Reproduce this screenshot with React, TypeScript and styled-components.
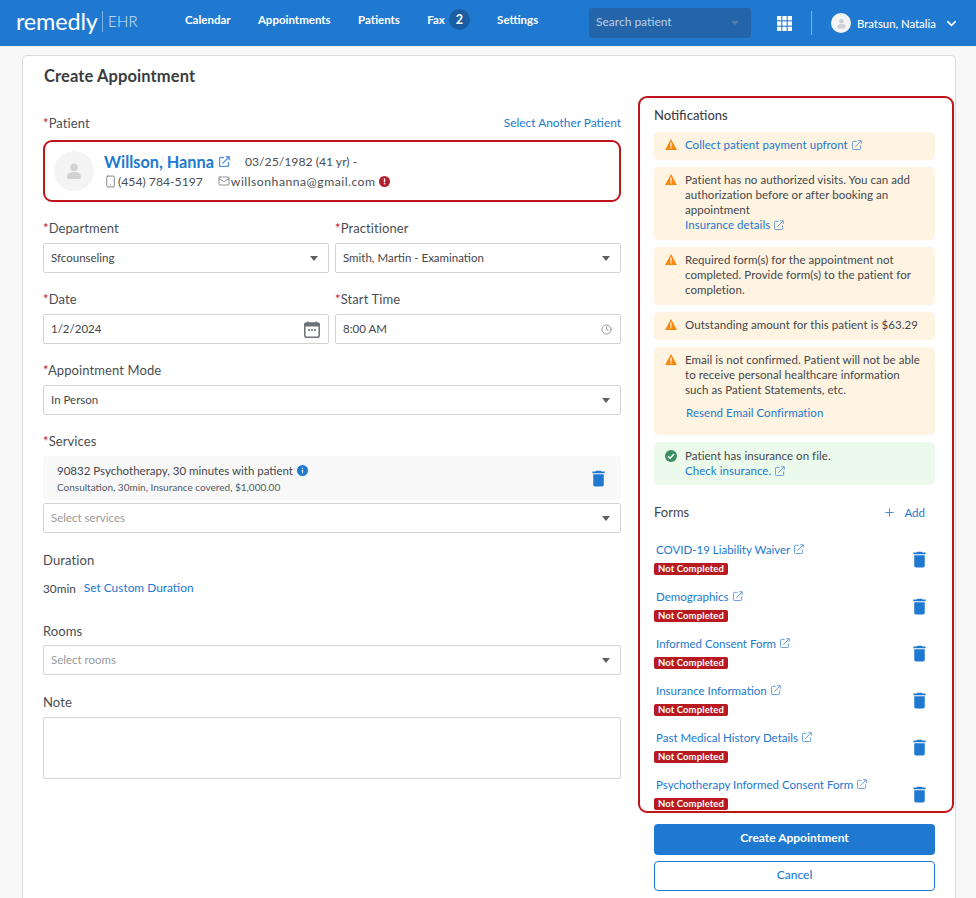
import React from 'react';
import styled, { createGlobalStyle } from 'styled-components';
import { Clock, Smartphone, Mail, Plus, ChevronDown } from 'lucide-react';

const Global = createGlobalStyle`
  html, body { margin: 0; padding: 0; height: 898px; overflow: hidden; background: #f8f8f8; }
  body { font-family: Lato, "Open Sans", sans-serif; color: #3f4347; }
  * { box-sizing: border-box; }
`;

const blue = '#2079d0';

const Header = styled.header`
  height: 46px; background: ${blue}; display: flex; align-items: center; color: #fff;
`;
const Logo = styled.div`
  width: 185px; padding-left: 16px; display: flex; align-items: center; height: 46px; padding-bottom: 5px;
`;
const LogoWord = styled.span`
  font-size: 23.5px; font-weight: 400; letter-spacing: -0.2px; line-height: 30px; width: 86px; white-space: nowrap;
`;
const LogoSuffix = styled.span`
  font-size: 15px; font-weight: 300; border-left: 1px solid #7fb3e6; padding-left: 5px; line-height: 21px; margin-top: 1px; color: #d5e6f7; letter-spacing: 0.2px;
`;
const Nav = styled.nav`
  width: 404px; display: flex; align-items: center; gap: 27.3px; padding-bottom: 7px;
`;
const NavItem = styled.a`
  font-size: 11.5px; font-weight: 700; display: flex; align-items: center; gap: 4px; color: #fff;
`;
const Badge = styled.span`
  width: 21px; height: 21px; border-radius: 50%; background: #1a5da3; display: flex; align-items: center; justify-content: center; font-size: 12.5px;
`;
const Search = styled.div`
  width: 162px; height: 30px; margin-top: -1px; background: #2464a8; border-radius: 3px; display: flex; align-items: center; justify-content: space-between;
  padding: 0 12px 2px 7px; font-size: 12px; color: #b9cfe6;
`;
const SearchCaret = styled.i`
  width: 0; height: 0; border-left: 4px solid transparent; border-right: 4px solid transparent; border-top: 4px solid #5a7ea6; margin-top: 2px;
`;
const GridWrap = styled.div`
  width: 60px; display: flex; justify-content: flex-end; padding-right: 19px; padding-left: 26px;
`;
const Divider = styled.div`
  width: 1px; height: 24px; background: #7fb3e6; margin: 0 19px 0 0;
`;
const Avatar = styled.div<{ $size: number; $bg: string }>`
  width: ${p => p.$size}px; height: ${p => p.$size}px; border-radius: 50%; background: ${p => p.$bg};
  display: flex; align-items: center; justify-content: center; flex-shrink: 0;
`;
const UserName = styled.span`
  font-size: 11.3px; font-weight: 500; margin: 0 8px 0 6px; white-space: nowrap;
`;

const Card = styled.main`
  margin: 9px 20px 0 22px; width: 934px; height: 843px; background: #fff; border: 1px solid #dcdcdc; border-bottom: 0; border-radius: 5px 5px 0 0;
  padding: 0 0 0 20px; display: flex; gap: 17px;
`;
const LeftCol = styled.div`
  width: 578px; flex-shrink: 0;
`;
const Title = styled.h1`
  margin: 0 0 16px; font-size: 16.5px; font-weight: 700; color: #3a3d40; height: 41px; line-height: 40px; letter-spacing: 0.1px; padding-left: 1px;
`;
const Field = styled.div`
  margin-bottom: 16px;
`;
const LabelRow = styled.div<{ $gap?: number }>`
  display: flex; justify-content: space-between; align-items: center; height: 20px; margin-bottom: ${p => p.$gap ?? 5}px;
`;
const Label = styled.label`
  font-size: 13px; color: #4a4e52; letter-spacing: 0.1px;
`;
const Req = styled.span`
  color: #c8141c;
`;
const Link = styled.a<{ $size?: number }>`
  color: ${blue}; font-size: ${p => p.$size ?? 11.5}px; display: inline-flex; align-items: center; gap: 4px;
`;
const RaisedLink = styled(Link)`
  padding-bottom: 2px;
`;
const PatientBox = styled.div`
  height: 62px; border: 2px solid #c0141c; border-radius: 9px; display: flex; align-items: center; padding: 0 9px; gap: 10px;
`;
const PatientInfo = styled.div`
  display: flex; flex-direction: column; gap: 2px;
`;
const PatientLine = styled.div`
  display: flex; align-items: center; font-size: 12.2px; color: #4a4e52; height: 18px;
`;
const PatientName = styled.a`
  font-size: 16.3px; font-weight: 700; color: ${blue}; display: inline-flex; align-items: center; gap: 5px; margin-right: 15px;
`;
const Phone = styled.span`
  margin: 0 15px 0 1px;
`;
const Email = styled.span`
  margin: 0 3px 0 1px; letter-spacing: 0.5px;
`;
const Row = styled.div`
  display: flex; gap: 6px;
`;
const HalfField = styled(Field)`
  flex: 1; min-width: 0;
`;
const Control = styled.div<{ $muted?: boolean }>`
  height: 30px; border: 1px solid #d4d4d4; border-radius: 2px; display: flex; align-items: center; justify-content: space-between;
  padding: 0 9px 2px 7px; font-size: 11.5px; color: ${p => (p.$muted ? '#9a9a9a' : '#43474b')}; background: #fff;
`;
const Caret = styled.i`
  width: 0; height: 0; border-left: 4px solid transparent; border-right: 4px solid transparent; border-top: 5px solid #5d6064; margin: 2px 1px 0 0;
`;
const ControlIcon = styled.span`
  display: flex; margin: 2px -1px 0 0;
`;
const ServiceBox = styled.div`
  height: 44px; background: #f8f8f8; border-radius: 3px; display: flex; align-items: center; justify-content: space-between; padding: 0 12px 0 14px; margin-bottom: 3px;
`;
const ServiceText = styled.div`
  display: flex; flex-direction: column; gap: 3px;
`;
const ServiceMain = styled.div`
  font-size: 11.5px; line-height: 15px; display: flex; align-items: center; gap: 4px; color: #43474b;
`;
const ServiceSub = styled.div`
  font-size: 10px; line-height: 13px; color: #55595d;
`;
const ServicesField = styled(Field)`
  margin-bottom: 17px;
`;
const DurationField = styled(Field)`
  margin-bottom: 18px;
`;
const DurationRow = styled.div`
  display: flex; align-items: center; gap: 8px; font-size: 11.8px; height: 30px; margin-top: -2px; color: #43474b;
`;
const RoomsField = styled(Field)`
  margin-bottom: 17px;
`;
const TextArea = styled.div`
  height: 62px; border: 1px solid #d4d4d4; border-radius: 2px;
`;

const RightCol = styled.div`
  width: 316px; flex-shrink: 0; padding-top: 40px;
`;
const Panel = styled.section`
  height: 717px; border: 2px solid #c0141c; border-radius: 9px; padding: 0 17px 0 14px; overflow: hidden;
`;
const PanelTitle = styled.h2`
  margin: 0; font-size: 13px; font-weight: 500; color: #3f4347; height: 34px; line-height: 35px;
`;
const Alert = styled.div<{ $green?: boolean }>`
  background: ${p => (p.$green ? '#ebfaeb' : '#fff3e1')}; border-radius: 5px; padding: ${p => (p.$green ? '6px 11px 7px' : '5px 11px 8px')}; display: flex; gap: 8px; margin-bottom: 7px;
  font-size: 11.5px; line-height: 15px; color: #43474b;
`;
const AlertIcon = styled.div`
  flex-shrink: 0; width: 12px; height: 15px; display: flex; align-items: center;
`;
const AlertBody = styled.div`
  display: flex; flex-direction: column; align-items: flex-start; letter-spacing: 0.05px;
`;
const ResendLink = styled(Link)`
  margin: 8px 0 7px 1px;
`;
const FormsHead = styled.div`
  display: flex; justify-content: space-between; align-items: center; height: 40px; margin-bottom: 4px; padding-right: 10px;
`;
const FormsTitle = styled.span`
  font-size: 13px; color: #3f4347;
`;
const AddPlus = styled.span`
  display: flex; margin-right: 4px;
`;
const FormRow = styled.div`
  height: 47px; display: flex; justify-content: space-between; align-items: center; padding-right: 5px;
`;
const FormText = styled.div`
  display: flex; flex-direction: column; align-items: flex-start; gap: 6px; padding-bottom: 3px;
`;
const FormLink = styled(Link)`
  margin-left: 2px; line-height: 15px;
`;
const Tag = styled.span`
  background: #b81a1f; color: #fff; font-size: 9.5px; font-weight: 700; height: 12px; line-height: 12px; padding: 0 4px; border-radius: 2px; letter-spacing: 0.1px;
`;
const PrimaryButton = styled.button`
  display: block; width: 281px; height: 31px; margin: 11px 0 6px 16px; padding: 0 0 4px; background: ${blue}; color: #fff; border: 0; border-radius: 4px;
  font: 700 12px Lato, sans-serif;
`;
const SecondaryButton = styled.button`
  display: block; width: 281px; height: 30px; margin-left: 16px; padding: 0 0 4px; background: #fff; color: ${blue}; border: 1px solid ${blue}; border-radius: 4px;
  font: 500 12px Lato, sans-serif;
`;

const Ext = ({ color = '#5b96d8', size = 11, weight = 1 }: { color?: string; size?: number; weight?: number }) => (
  <svg width={size} height={size} viewBox="0 0 11 11" fill="none" stroke={color} strokeWidth={weight}>
    <path d="M5 1.500H1.500a1 1 0 0 0-1 1v7a1 1 0 0 0 1 1h7a1 1 0 0 0 1-1V6" />
    <path d="M3.500 7.500 10 1M6.800 .8h3.400v3.400" />
  </svg>
);
const Warn = () => (
  <svg width="12" height="11" viewBox="0 0 12 11">
    <path d="M6 0 12 11H0Z" fill="#f58a12" />
    <rect x="5.400" y="3.500" width="1.200" height="4" fill="#fff" />
    <rect x="5.400" y="8.200" width="1.200" height="1.200" fill="#fff" />
  </svg>
);
const Check = () => (
  <svg width="12" height="12" viewBox="0 0 12 12">
    <circle cx="6" cy="6" r="6" fill="#3c8f63" />
    <path d="M3 6.200 5.200 8.300 9 4" fill="none" stroke="#fff" strokeWidth="1.400" />
  </svg>
);
const Trash = () => (
  <svg width="21" height="21" viewBox="0 0 24 24" fill={blue}>
    <path d="M6 19c0 1.100.9 2 2 2h8c1.100 0 2-.9 2-2V7H6v12zM19 4h-3.500l-1-1h-5l-1 1H5v2h14V4z" />
  </svg>
);
const Person = ({ size, color }: { size: number; color: string }) => (
  <svg width={size} height={size} viewBox="0 0 20 20" fill={color}>
    <circle cx="10" cy="6" r="4.200" />
    <path d="M2.500 19v-3.500C2.500 12.500 5.500 11 10 11s7.500 1.500 7.500 4.500V19Z" />
  </svg>
);
const Calendar = () => (
  <svg width="16" height="17" viewBox="0 0 16 17" fill="none">
    <rect x=".8" y="2" width="14.400" height="14.200" rx="1.500" stroke="#6c7074" strokeWidth="1.500" />
    <rect x=".8" y="2" width="14.400" height="3.500" fill="#6c7074" />
    <path d="M4 .5v2M12 .5v2" stroke="#6c7074" strokeWidth="1.500" />
    <path d="M4 9h2M7 9h2M10 9h2" stroke="#6c7074" strokeWidth="1.500" />
  </svg>
);
const Info = () => (
  <svg width="11" height="11" viewBox="0 0 11 11">
    <circle cx="5.500" cy="5.500" r="5.500" fill={blue} />
    <rect x="4.900" y="4.700" width="1.200" height="3.600" fill="#fff" />
    <rect x="4.900" y="2.700" width="1.200" height="1.200" fill="#fff" />
  </svg>
);
const Alarm = () => (
  <svg width="11" height="11" viewBox="0 0 11 11">
    <circle cx="5.500" cy="5.500" r="5.500" fill="#b0202e" />
    <rect x="4.800" y="2.400" width="1.400" height="3.800" fill="#fff" />
    <rect x="4.800" y="7" width="1.400" height="1.400" fill="#fff" />
  </svg>
);
const AppGrid = () => (
  <svg width="15" height="15" viewBox="0 0 14 14" fill="#fff">
    {[0, 5, 10].flatMap(y => [0, 5, 10].map(x => <rect key={`${x}-${y}`} x={x} y={y} width="4" height="4" />))}
  </svg>
);

const forms = [
  'COVID-19 Liability Waiver',
  'Demographics',
  'Informed Consent Form',
  'Insurance Information',
  'Past Medical History Details',
  'Psychotherapy Informed Consent Form',
];

const Select = ({ value, muted }: { value: string; muted?: boolean }) => (
  <Control $muted={muted}>
    {value}
    <Caret />
  </Control>
);

export default function App() {
  return (
    <>
      <Global />
      <Header>
        <Logo>
          <LogoWord>remedly</LogoWord>
          <LogoSuffix>EHR</LogoSuffix>
        </Logo>
        <Nav>
          <NavItem>Calendar</NavItem>
          <NavItem>Appointments</NavItem>
          <NavItem>Patients</NavItem>
          <NavItem>Fax<Badge>2</Badge></NavItem>
          <NavItem>Settings</NavItem>
        </Nav>
        <Search>Search patient<SearchCaret /></Search>
        <GridWrap><AppGrid /></GridWrap>
        <Divider />
        <Avatar $size={20} $bg="#f4f4f4"><Person size={11} color="#d0d0d0" /></Avatar>
        <UserName>Bratsun, Natalia</UserName>
        <ChevronDown size={15} strokeWidth={2.5} color="#fff" />
      </Header>
      <Card>
        <LeftCol>
          <Title>Create Appointment</Title>
          <Field>
            <LabelRow $gap={7}>
              <Label><Req>*</Req>Patient</Label>
              <RaisedLink $size={11.9}>Select Another Patient</RaisedLink>
            </LabelRow>
            <PatientBox>
              <Avatar $size={40} $bg="#f4f4f4"><Person size={18} color="#d2d2d2" /></Avatar>
              <PatientInfo>
                <PatientLine>
                  <PatientName>Willson, Hanna <Ext weight={1.4} /></PatientName>
                  03/25/1982 (41 yr) -
                </PatientLine>
                <PatientLine>
                  <Smartphone size={13} strokeWidth={1.5} color="#6c7074" />
                  <Phone>(454) 784-5197</Phone>
                  <Mail size={12} strokeWidth={1.5} color="#6c7074" />
                  <Email>willsonhanna@gmail.com</Email>
                  <Alarm />
                </PatientLine>
              </PatientInfo>
            </PatientBox>
          </Field>
          <Row>
            <HalfField>
              <LabelRow><Label><Req>*</Req>Department</Label></LabelRow>
              <Select value="Sfcounseling" />
            </HalfField>
            <HalfField>
              <LabelRow><Label><Req>*</Req>Practitioner</Label></LabelRow>
              <Select value="Smith, Martin - Examination" />
            </HalfField>
          </Row>
          <Row>
            <HalfField>
              <LabelRow><Label><Req>*</Req>Date</Label></LabelRow>
              <Control>1/2/2024<ControlIcon><Calendar /></ControlIcon></Control>
            </HalfField>
            <HalfField>
              <LabelRow><Label><Req>*</Req>Start Time</Label></LabelRow>
              <Control>8:00 AM<ControlIcon><Clock size={11} strokeWidth={1.5} color="#6c7074" /></ControlIcon></Control>
            </HalfField>
          </Row>
          <Field>
            <LabelRow><Label><Req>*</Req>Appointment Mode</Label></LabelRow>
            <Select value="In Person" />
          </Field>
          <ServicesField>
            <LabelRow><Label><Req>*</Req>Services</Label></LabelRow>
            <ServiceBox>
              <ServiceText>
                <ServiceMain>90832 Psychotherapy, 30 minutes with patient <Info /></ServiceMain>
                <ServiceSub>Consultation, 30min, Insurance covered, $1,000.00</ServiceSub>
              </ServiceText>
              <Trash />
            </ServiceBox>
            <Select value="Select services" muted />
          </ServicesField>
          <DurationField>
            <LabelRow><Label>Duration</Label></LabelRow>
            <DurationRow>30min <RaisedLink $size={11.9}>Set Custom Duration</RaisedLink></DurationRow>
          </DurationField>
          <RoomsField>
            <LabelRow $gap={4}><Label>Rooms</Label></LabelRow>
            <Select value="Select rooms" muted />
          </RoomsField>
          <Field>
            <LabelRow><Label>Note</Label></LabelRow>
            <TextArea />
          </Field>
        </LeftCol>
        <RightCol>
          <Panel>
            <PanelTitle>Notifications</PanelTitle>
            <Alert>
              <AlertIcon><Warn /></AlertIcon>
              <AlertBody><Link>Collect patient payment upfront <Ext size={10} /></Link></AlertBody>
            </Alert>
            <Alert>
              <AlertIcon><Warn /></AlertIcon>
              <AlertBody>
                Patient has no authorized visits. You can add authorization before or after booking an appointment
                <Link>Insurance details <Ext size={10} /></Link>
              </AlertBody>
            </Alert>
            <Alert>
              <AlertIcon><Warn /></AlertIcon>
              <AlertBody>Required form(s) for the appointment not completed. Provide form(s) to the patient for completion.</AlertBody>
            </Alert>
            <Alert>
              <AlertIcon><Warn /></AlertIcon>
              <AlertBody>Outstanding amount for this patient is $63.29</AlertBody>
            </Alert>
            <Alert>
              <AlertIcon><Warn /></AlertIcon>
              <AlertBody>
                Email is not confirmed. Patient will not be able to receive personal healthcare information such as Patient Statements, etc.
                <ResendLink>Resend Email Confirmation</ResendLink>
              </AlertBody>
            </Alert>
            <Alert $green>
              <AlertIcon><Check /></AlertIcon>
              <AlertBody>
                Patient has insurance on file.
                <Link>Check insurance. <Ext size={10} /></Link>
              </AlertBody>
            </Alert>
            <FormsHead>
              <FormsTitle>Forms</FormsTitle>
              <Link $size={11.5}><AddPlus><Plus size={13} strokeWidth={1.5} /></AddPlus>Add</Link>
            </FormsHead>
            {forms.map(f => (
              <FormRow key={f}>
                <FormText>
                  <FormLink>{f} <Ext size={10} /></FormLink>
                  <Tag>Not Completed</Tag>
                </FormText>
                <Trash />
              </FormRow>
            ))}
          </Panel>
          <PrimaryButton>Create Appointment</PrimaryButton>
          <SecondaryButton>Cancel</SecondaryButton>
        </RightCol>
      </Card>
    </>
  );
}
